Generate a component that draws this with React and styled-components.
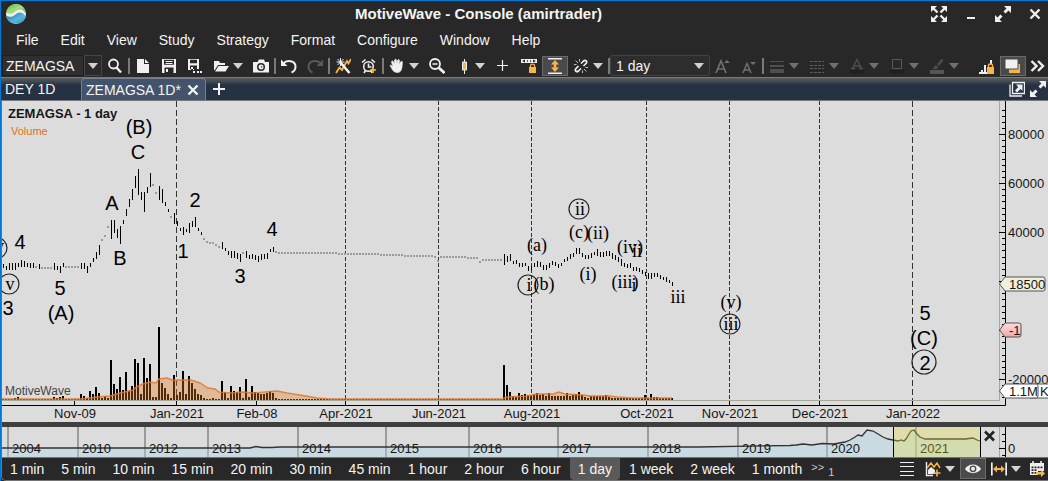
import React from 'react';
import styled, { createGlobalStyle, css } from 'styled-components';

const GlobalStyle = createGlobalStyle`
  *, *::before, *::after { box-sizing: border-box; }
  html { background: #282828; }
  body { margin: 0; font: 14px/16px "Liberation Sans", Arial, sans-serif; color: #f4f4f4; }
  button, input, select { font: inherit; color: inherit; margin: 0; border: 0; background: none; padding: 0; }
  button { display: flex; align-items: center; cursor: pointer; }
`;

const Window = styled.div`
  display: flex;
  flex-direction: column;
  background: #282828;
  border-top: 1px solid #0078d7;
  border-left: 1px solid #0078d7;
`;

const Frame = styled.main`
  border-left: 1px solid #6d6d6d;
  background: #dcdcdc;
  display: flex;
  flex-direction: column;
`;

/* ---------- title bar and menu ---------- */

const TitleBar = styled.header`
  display: flex;
  align-items: center;
  height: 25px;
  padding: 0 5px;
`;

const Title = styled.h1`
  flex: 1;
  margin: 0;
  font-size: 15px;
  line-height: 24px;
  font-weight: bold;
  text-align: center;
`;

const WindowButtons = styled.div`
  display: flex;
  gap: 16px;
`;

const MenuBar = styled.nav`
  display: flex;
  height: 28px;
  padding: 0 4px;
`;

const MenuItem = styled.button`
  padding: 0 11px;
`;

/* ---------- tool bar ---------- */

const ToolBar = styled.div`
  display: flex;
  align-items: center;
  height: 23px;
  padding-left: 1px;
`;

const ToolButton = styled.button`
  justify-content: center;
  width: ${(p) => (p.$menu ? 40 : p.$narrow ? 22 : 26)}px;
  height: 20px;
  flex: none;
  gap: 4px;
  ${(p) => p.$on && css`
    background: #4a4a4a;
    border: 1px solid #6a6a6a;
  `}
`;

const Separator = styled.span`
  flex: none;
  width: 2px;
  height: 16px;
  background: #7a7a7a;
`;

const Spacer = styled.span`
  flex: 1;
`;

const Combo = styled.div`
  display: flex;
  flex: none;
  width: 100px;
  height: 21px;
`;

const SymbolInput = styled.input`
  width: 82px;
  padding: 0 3px;
  background: #2f2f2f;
  border: 1px solid #202020;
`;

const ComboButton = styled.button`
  justify-content: center;
  width: 18px;
  background: #2a2a2a;
  border: 1px solid #454545;
`;

const SelectBox = styled.div`
  display: grid;
  flex: none;
  align-items: center;
  width: 100px;
  height: 21px;
  background: #2d2d2d;
  border: 1px solid #414141;
  border-radius: 2px;

  select {
    grid-area: 1 / 1;
    appearance: none;
    padding: 0 5px;
    outline: 0;
  }
  svg {
    grid-area: 1 / 1;
    justify-self: end;
    margin-right: 5px;
    pointer-events: none;
  }
`;

/* ---------- tabs ---------- */

const TabBar = styled.div`
  display: flex;
  align-items: stretch;
  height: 24px;
  border-top: 1px solid #7b7b7b;
  border-bottom: 1px solid #77787a;
  background: linear-gradient(#5c5e60, #263243 7px);
  padding-right: 2px;
`;

const Tab = styled.div`
  display: flex;
  flex: none;
  align-items: center;
  justify-content: space-between;
  padding: 0 4px;
  width: ${(p) => (p.$active ? 125 : 80)}px;
  white-space: nowrap;
  ${(p) => p.$active && css`
    background: #43536b;
    border: 1px solid #77808c;
    border-bottom: 0;
    border-radius: 4px 4px 0 0;
  `}
`;

const TabAction = styled.button`
  padding: 0 5px;
`;

/* ---------- chart ---------- */

const Drawing = styled.svg`
  display: block;
  width: 100%;
  height: auto;
  font: 13px "Liberation Sans", Arial, sans-serif;
  fill: #161616;
`;

const Divider = styled.div`
  height: 5px;
  background: #3f3f3f;
`;

/* ---------- period bar ---------- */

const PeriodBar = styled.footer`
  display: flex;
  align-items: stretch;
  height: 24px;
  border: solid #747474;
  border-width: 1px 0 1px 1px;
  border-bottom-left-radius: 5px;
  background: #282828;

  ${ToolButton} { height: 21px; }
`;

const Period = styled.button`
  padding: 0 8px;
  margin-right: 1px;
  border-radius: 0 0 4px 4px;
  white-space: nowrap;
  background: ${(p) => (p.$active ? '#5a5a5a' : 'none')};
`;

const More = styled.button`
  gap: 4px;
  font-size: 11px;
  color: #c8c8c8;

  span:first-child { line-height: 8px; margin-bottom: 4px; }
  span:last-child { margin-top: 5px; }
`;

/* ---------- icons ---------- */

const WHITE = '#f0f0f0';
const AMBER = '#f6b54b';

const Icon = ({ children, size = 16 }) => (
  <svg width={size} height={size} viewBox="0 0 16 16" fill={WHITE} aria-hidden="true">{children}</svg>
);

const Caret = ({ dim }) => (
  <svg width="10" height="6" viewBox="0 0 10 6" aria-hidden="true">
    <path d="M0 0H10L5 6Z" fill={dim ? '#707070' : '#d2d2d2'} />
  </svg>
);

const Logo = () => (
  <svg width="20" height="20" viewBox="0 0 20 20" aria-hidden="true">
    <defs>
      <linearGradient id="leaf" x1="0" y1="0" x2="1" y2="1">
        <stop offset="0" stopColor="#4fb52f" />
        <stop offset="0.5" stopColor="#a5e07c" />
        <stop offset="1" stopColor="#4bb04a" />
      </linearGradient>
      <linearGradient id="sea" x1="0" y1="0" x2="1" y2="1">
        <stop offset="0" stopColor="#2374ad" />
        <stop offset="0.6" stopColor="#5db4e0" />
        <stop offset="1" stopColor="#2b83bd" />
      </linearGradient>
    </defs>
    <circle cx="10" cy="10" r="10" fill="#eef5ee" />
    <path d="M0.400 9C.6 4 5 .3 10 .3c5.600 0 9.600 4.600 9.700 9.500-1.300-2.400-3-4.300-5.500-4.300C9.500 5.500 8 9.800 4 9.800 2.500 9.800 1.300 9.600 .4 9Z" fill="url(#leaf)" />
    <path d="M.4 11.800c1.400.8 2.700 1.100 4.300 1 4.200-.3 5.300-4.300 9-4.300 2.600 0 4.500 1.600 5.700 3.700C18.500 16.500 14.800 19.700 10 19.700 5 19.700.9 16.500.4 11.800Z" fill="url(#sea)" />
  </svg>
);

const ExpandIcon = () => (
  <Icon>
    <path d="M9 0h7v7ZM0 9v7h7Z" />
    <path d="M14 2 9.500 6.500M2 14l4.500-4.500" stroke={WHITE} strokeWidth="3" />
  </Icon>
);

const FullscreenIcon = () => (
  <Icon>
    <path d="M0 0h6L0 6ZM16 0v6l-6-6ZM0 16v-6l6 6ZM16 16h-6l6-6Z" />
    <path d="m2 2 4.500 4.500M14 2 9.500 6.500M2 14l4.500-4.500M14 14 9.500 9.500" stroke={WHITE} strokeWidth="2.400" />
  </Icon>
);

const icons = {
  search: <><circle cx="6.500" cy="6" r="4.500" fill="none" stroke={WHITE} strokeWidth="1.800" /><path d="M9.500 9.500 14 14.500" stroke={WHITE} strokeWidth="2.400" /></>,
  file: <path d="M2 1h7v5h5v9H2ZM10 1l4 4h-4Z" />,
  save: <path fillRule="evenodd" d="M1 1h14v14H1ZM3 1.800v5h10v-5ZM3.500 9.500V15h9V9.500ZM4.500 3h7v1h-7ZM4.500 5h7v1h-7ZM5 11h2v3H5Z" />,
  saveAs: <><path fillRule="evenodd" d="M1 1h11v10H7v1H1ZM3 1.800v3.500h7V1.800ZM3 7.500V11h7V7.500ZM4 9h2v3H4Z" /><path d="M6 13h2v2H6ZM10 13h2v2h-2ZM13 13h2v2h-2Z" /></>,
  folder: <path d="M1 3h5l1 2h5v2H5L1.800 12H1ZM5.500 8H16l-3.500 5.500H2Z" />,
  camera: <path fillRule="evenodd" d="M0 4h4.500L6 1.500h5L12 4h4v10.500H0ZM8 5a4 4 0 1 0 0 8 4 4 0 0 0 0-8ZM8 6.500a2.500 2.500 0 1 1 0 5 2.500 2.500 0 0 1 0-5ZM8 8.300v1.200h1.200V8.300Z" />,
  undo: <><path d="M2.500 5.500C5.500 1.500 14.500 2.500 14.500 8.500c0 3-1.500 5-4 6" fill="none" stroke={WHITE} strokeWidth="2" /><path d="M0 1.500V8h6.500Z" /></>,
  redo: <g fill="#5a5a5a"><path d="M13.500 5.500C10.500 1.500 1.500 2.500 1.500 8.500c0 3 1.500 5 4 6" fill="none" stroke="#5a5a5a" strokeWidth="2" /><path d="M16 1.500V8H9.500Z" /></g>,
  wand: <><path d="M1 15 4.500 9.500 7 12l5-9 1.500 2.500L16 1" fill="none" stroke={AMBER} strokeWidth="1.800" /><path d="m5 4 9.500 11" stroke={WHITE} strokeWidth="2.600" /><path d="M5.500 0v8M1.500 4h8M2.500 1l6 6M8.500 1l-6 6" stroke={WHITE} strokeWidth="1" /></>,
  alarm: <><circle cx="7.500" cy="8.500" r="4.800" fill="none" stroke={WHITE} strokeWidth="1.500" /><path d="M1 4.500 4.500 1.500M10.500 1.500 14 4.500M7.500 5.500v3.500h3M4.500 12.500 3 15M10 13l1 2" fill="none" stroke={WHITE} strokeWidth="1.600" /><path d="M9 12h6M12 9v6" stroke={AMBER} strokeWidth="1.700" /></>,
  hand: <path d="M1 7.500c1-1 2 .2 3 1.500L2.500 4c0-1.500 1.700-1.500 2 0L5.300 6.500 5.500 2.300c.3-1.400 2-1.200 2 0V6L8.600 2.300c.4-1.200 2-.8 1.900.5L9.900 6.500l1.800-2.700c.8-1 2.200-.1 1.700 1L13 9c-.3 3-1.500 5.500-4.500 5.500-3 0-4.500-1.500-5.500-3.500Z" stroke={WHITE} strokeWidth="0.600" />,
  zoomOut: <><circle cx="6" cy="6" r="5" fill="none" stroke={WHITE} strokeWidth="1.800" /><path d="M3.500 6h5" stroke={WHITE} strokeWidth="1.500" /><path d="m9.800 9.800 5.700 5.200" stroke={WHITE} strokeWidth="2.800" /></>,
  candle: <><path d="M9.500 1v15" stroke={WHITE} strokeWidth="1" /><path d="M7.500 4h4v8h-4Z" fill={AMBER} stroke={WHITE} strokeWidth="1" /></>,
  plus: <path d="M7.500 2v11M2 7.500h11" stroke={WHITE} strokeWidth="1.200" />,
  widthLock: <><path fillRule="evenodd" d="M0 1h16v4H0ZM1 3l3 1.500v-3ZM15 3l-3 1.500v-3ZM6 2.300v1.500h1V2.300ZM9 2.300v1.500h1V2.300Z" /><path d="M8 9h7v6H8Z" fill={AMBER} /><path d="M9.500 9.500V7.500c0-1.800 4-1.800 4 0v2" fill="none" stroke={AMBER} strokeWidth="1.300" /></>,
  fitHeight: <><path d="M1 0h14v1.600H1ZM1 14.400h14V16H1Z" /><path d="M8 2l4 4.500H9.300v3H12L8 14 4 9.500h2.700v-3H4Z" fill={AMBER} /></>,
  unlink: <><path d="M8 5.500 10.500 3c2-1.800 4.300.7 2.500 2.500L10.500 8M8 10.500 5.500 13c-2 1.800-4.300-.7-2.500-2.500L5.500 8" fill="none" stroke={WHITE} strokeWidth="1.700" /><path d="M2.500 2.500l2.500 2.500M6.500 1v2.500M1 6.500h2.500M13.500 13.500 11 11M9.500 15v-2.500M15 9.500h-2.500" stroke="#bdbdbd" strokeWidth="1" /></>,
  fontUp: <><path d="M1 15 6 3l5 12M3 11h6.500" fill="none" stroke="#707070" strokeWidth="1.700" /><path d="M9 5l3-3 3 3Z" fill="#707070" /></>,
  fontDown: <><path d="M2 15 6 5.500 10 15M3.500 12h5" fill="none" stroke="#707070" strokeWidth="1.500" /><path d="M9 4h6l-3 3Z" fill="#707070" /></>,
  lines: <path d="M1 3h14v1H1ZM1 7h14v2H1ZM1 11h14v4H1Z" fill="#505050" />,
  dashes: <path d="M1 3.500h14M1 7.500h14M1 10.500h14M1 14.500h14" stroke="#5c5c5c" strokeWidth="1" strokeDasharray="3 1" />,
  textColor: <><path d="M3.500 10.500 8 1.500l4.500 9M5 8h6M2 10.500h4M10 10.500h4" fill="none" stroke="#505050" strokeWidth="1.300" /><path d="M1 12h14v3.500H1Z" fill="#202020" /></>,
  shapeColor: <><path d="M3.500 1.500h9v9h-9Z" fill="none" stroke="#5a5a5a" /><path d="M1 12h14v3.500H1Z" fill="#202020" /></>,
  brush: <><path d="M8 6l4-4.500c1.500-1.500 3 0 2 1.500L10 8ZM7 7l2.500 2C9 11 6 12 3 10.500 5.500 10 5 7.500 7 7Z" fill="#4c4c4c" /><path d="M1 12h14v4H1Z" fill="#555" /></>,
  chartLock: <><path d="M0 14h8v2H0ZM2 12h2v2H2ZM5 7h2v7H5ZM11 2h2v4h-2Z" /><path d="M8 9h7v7H8Z" fill={AMBER} /><path d="M9.500 9V7.500c0-2 4-2 4 0V9" fill="none" stroke={AMBER} strokeWidth="1.400" /></>,
  layers: <><path d="M4 6h11v9H4Z" fill={AMBER} /><path d="M0 1h13v10H0Z" stroke="#4a4a4a" /></>,
  more: <path d="m2.500 3 5 5-5 5M9 3l5 5-5 5" fill="none" stroke={WHITE} strokeWidth="2.400" />,
  minimize: <path d="M4 11h8v2H4Z" />,
  close: <path d="m3.500 3.500 9 9M12.500 3.500l-9 9" stroke={WHITE} strokeWidth="2.400" />,
  popOut: <><path d="M3.500 1.500h12v11h-12ZM1 3.500v11.500h12" fill="none" stroke={WHITE} strokeWidth="1.300" /><path d="M7 3.500h6.500V10l-2-2-3.500 3.500L6 9.500 9.200 6Z" /></>,
  list: <path d="M1 1h14v1H1ZM1 5h14v1H1ZM1 10h14v1H1ZM1 14h14v1H1Z" />,
  studyAdd: <><path d="M1.500 1v13.500H8" fill="none" stroke={WHITE} strokeWidth="1.400" /><path d="M3 13V9l3-3 4 3v4Z" /><path d="m2 7 4-5 3 4 3-4 3 5" fill="none" stroke={AMBER} strokeWidth="1.500" /><path d="M8.500 12h7M12 8.500v7" stroke={AMBER} strokeWidth="1.600" /></>,
  eye: <><path d="M0 8C3 2 13 2 16 8 13 13.500 3 13.500 0 8Z" /><circle cx="8" cy="7.800" r="3.400" fill="#4a4a4a" /><circle cx="8" cy="7.800" r="2" /></>,
  fitWidth: <><path d="M0 1.500h1.700v13H0ZM14.300 1.500H16v13h-1.700Z" /><path d="m2 8 4-3.500V7h4V4.500L14 8l-4 3.500V9H6v2.500Z" fill={AMBER} /></>,
  calendar: <><path fillRule="evenodd" d="M1 2h14v8H9v4H1ZM2.500 5.500v1.800h2V5.500ZM5.500 5.500v1.800h2V5.500ZM8.500 5.500v1.800h2V5.500ZM11.500 5.500v1.800h2V5.500ZM2.500 8.300v1.800h2V8.300ZM5.500 8.300v1.800h2V8.300ZM2.500 11v1.800h2V11ZM5.500 11v1.800h2V11Z" /><path d="M4 0v3M12 0v3" stroke={WHITE} strokeWidth="1.600" /><path d="M7 11h5V8.500l4 4-4 3.500v-2.500H7Z" fill={AMBER} /></>,
};

const Tool = ({ name, label, menu, on, dim, narrow }) => (
  <ToolButton type="button" aria-label={label} $menu={menu} $on={on} $narrow={narrow}>
    <Icon>{icons[name]}</Icon>
    {menu && <Caret dim={dim} />}
  </ToolButton>
);

/* ---------- price data: [x, high, low] and [x, close] in chart units ---------- */

const BARS = [
  [3, 264, 268], [6, 266, 270], [9, 263, 270], [12, 263, 270], [15, 263, 270], [18, 263, 267], [21, 260, 267], [24, 261, 267], [27, 263, 267], [30, 263, 268], [33, 263, 268], [39, 264, 269],
  [54, 263, 270], [57, 266, 270], [60, 266, 273], [63, 263, 267], [81, 263, 269], [84, 263, 269], [87, 266, 273], [90, 263, 267], [93, 258, 262], [96, 252, 259], [99, 245, 255],
  [111, 220, 239], [114, 220, 233], [117, 229, 238], [120, 226, 244], [123, 220, 224], [126, 209, 216], [129, 199, 207], [132, 189, 200], [135, 176, 188], [138, 169, 195], [141, 192, 200], [144, 192, 212], [147, 187, 193], [150, 173, 187],
  [159, 186, 200], [162, 189, 203], [165, 202, 206], [168, 209, 212], [174, 213, 224], [177, 221, 226], [180, 228, 231], [183, 227, 235], [186, 229, 232], [189, 223, 233], [192, 221, 227], [195, 217, 227], [198, 228, 231], [201, 232, 235],
  [222, 242, 249], [225, 248, 251], [228, 251, 255], [231, 251, 258], [234, 251, 258], [237, 253, 259], [240, 254, 262], [246, 251, 258], [249, 255, 259], [252, 254, 259], [255, 255, 260], [258, 256, 262], [261, 254, 260], [264, 254, 259], [267, 253, 259], [270, 249, 252], [273, 247, 252],
  [504, 254, 265], [507, 256, 262], [510, 254, 261], [513, 261, 264], [516, 260, 264], [519, 263, 267], [522, 263, 267], [525, 263, 266], [528, 266, 271], [531, 266, 270], [534, 263, 267], [537, 261, 267], [540, 262, 267], [543, 265, 270], [546, 265, 270], [549, 263, 268], [552, 261, 265], [555, 262, 266], [558, 264, 268], [561, 263, 266], [564, 259, 262], [567, 257, 261], [570, 254, 259], [573, 253, 257], [576, 248, 254], [579, 248, 254], [582, 253, 257], [585, 255, 259], [588, 255, 259], [591, 253, 258], [594, 252, 255], [597, 249, 256], [600, 252, 257], [603, 252, 257], [606, 251, 256], [609, 251, 256], [612, 253, 259], [615, 255, 260], [618, 257, 262], [621, 259, 266], [624, 263, 267], [627, 264, 268], [630, 263, 268], [633, 267, 271], [636, 267, 271], [639, 268, 272], [642, 270, 274], [645, 272, 276], [648, 273, 279], [651, 273, 279], [654, 273, 277], [657, 273, 277], [660, 275, 279], [663, 277, 280], [666, 277, 282], [669, 280, 283], [672, 282, 286],
];

const run = (from, to, y) => {
  const out = [];
  for (let x = from; x <= to; x += 3) out.push([x, y]);
  return out;
};

const DOTS = [
  [36, 267], ...run(42, 51, 268), ...run(66, 78, 267), [102, 240], [105, 236], [108, 227], [153, 185], [156, 193], [171, 217],
  [204, 239], [207, 242], [210, 243], [213, 243], [216, 245], [219, 247], [243, 253],
  [276, 252], ...run(279, 336, 253), ...run(339, 378, 254), ...run(381, 402, 255), ...run(405, 432, 256), [435, 257], [438, 261],
  ...run(441, 465, 257), ...run(468, 477, 258), [480, 262], ...run(483, 501, 260),
];

const VOLUME = {
  54: 3, 57: 2, 60: 3, 63: 4, 15: 2, 18: 3, 81: 6, 84: 4, 87: 2, 90: 9, 93: 6, 96: 13, 99: 7, 102: 2, 105: 4, 108: 2, 111: 40, 114: 16, 117: 11, 120: 23, 123: 10, 126: 28, 129: 9, 132: 14, 135: 41, 138: 37, 141: 6, 144: 42, 147: 22, 150: 36, 153: 3, 156: 3, 159: 73, 162: 17, 165: 12, 168: 6, 171: 2, 174: 25, 177: 5, 180: 8, 183: 29, 186: 6, 189: 24, 192: 17, 195: 11, 198: 6, 201: 5, 204: 2, 213: 2, 222: 19, 225: 8, 228: 2, 231: 14, 234: 9, 237: 8, 240: 13, 243: 2, 246: 21, 249: 3, 252: 14, 255: 8, 258: 7, 261: 6, 264: 6, 267: 7, 270: 9, 273: 7, 276: 2,
  504: 35, 507: 15, 510: 8, 513: 4, 516: 3, 519: 7, 522: 5, 525: 6, 528: 5, 531: 4, 534: 6, 537: 7, 540: 5, 543: 6, 546: 4, 549: 7, 552: 4, 555: 4, 558: 4, 561: 4, 564: 4, 567: 7, 570: 4, 573: 5, 576: 6, 579: 8, 582: 5, 585: 3, 588: 2, 591: 4, 594: 4, 597: 4, 600: 4, 603: 4, 606: 5, 609: 3, 645: 5, 648: 2, 651: 6, 654: 3, 657: 3,
};

const AVERAGE_PEAK = 'L80 399 97 397 110 396 120 393 133 390 136 387 143 384 150 382 156 383 159 379 167 378 172 380 191 380 200 383 208 388 215 389 219 392 230 393 243 392 253 393 277 391 287 393 300 395 317 398 330 399';
const AVERAGE_TAIL = 'L502 399 507 397 527 396 537 394 553 394 559 392 565 394 583 395 590 396 610 396 617 397 633 398 672 398';
const AVERAGE = `M2 399${AVERAGE_PEAK}${AVERAGE_TAIL}`;

const MONTHS = [
  [74, 'Nov-09'], [176, 'Jan-2021', 'long'], [256, 'Feb-08'], [345, 'Apr-2021', 'short'], [438, 'Jun-2021', 'short'], [531, 'Aug-2021', 'short'],
  [646, 'Oct-2021', 'short'], [729, 'Nov-2021', 'short'], [819, 'Dec-2021', 'short'], [912, 'Jan-2022', 'long'],
];

const WAVES = [
  [139, 134, '(B)'], [138, 159, 'C'], [112, 210, 'A'], [120, 265, 'B'], [195, 207, '2'], [183, 258, '1'], [272, 236, '4'], [240, 283, '3'],
  [60, 295, '5'], [61, 320, '(A)'], [20, 249, '4'], [8, 315, '3'], [925, 320, '5'], [924, 345, '(C)'], [925, 370, '2', 924, 362, 12],
];

const SUBWAVES = [
  [-3, 252, 'iv', -3, 248, 10], [10, 290, 'v', 9, 284, 10], [537, 251, '(a)'], [529, 291, 'i', 528, 285, 10], [544, 290, '(b)'], [580, 215, 'ii', 579, 209, 10], [579, 238, '(c)'],
  [598, 239, '(ii)'], [588, 280, '(i)'], [630, 253, '(iv)'], [637, 257, 'ii'], [625, 288, '(iii)'], [634, 291, 'i'], [678, 303, 'iii'], [731, 308, '(v)'], [731, 330, 'iii', 730, 324, 10],
];

const WaveLabels = ({ items, size, family }) => (
  <g fontSize={size} fontFamily={family} textAnchor="middle" fill="#000">
    {items.map(([x, y, text, cx, cy, r]) => (
      <g key={`${x}-${y}`}>
        {r && <circle cx={cx} cy={cy} r={r} fill="none" stroke="#222" strokeWidth="1.200" />}
        <text x={x} y={y}>{text}</text>
      </g>
    ))}
  </g>
);

const PriceTag = ({ y, right, fill, text }) => (
  <g>
    <path d={`M999.500 ${y}L1005 ${y - 7}H${right - 2}q2 0 2 2v10q0 2 -2 2H1005Z`} fill={fill} stroke="#555" />
    <text x="1009" y={y + 5}>{text}</text>
  </g>
);

const ticks = Array.from({ length: 48 }, (_, i) => ({ y: Math.round(109.500 + i * 6.125) + 0.500, major: i % 8 === 4 }));

const PriceChart = () => (
  <Drawing viewBox="2 101 1046 321" role="img" aria-label="ZEMAGSA daily price chart">
    <defs>
      <linearGradient id="pink" x1="0" y1="0" x2="0" y2="1">
        <stop offset="0" stopColor="#fbdcdc" />
        <stop offset="1" stopColor="#f0a9a9" />
      </linearGradient>
    </defs>
    {MONTHS.map(([x, label, dash]) => (
      <g key={label}>
        {dash && <path d={`M${x + 0.500} 101V400`} stroke="#333" strokeDasharray={dash === 'long' ? '6 3' : '4 2'} />}
        <path d={`M${x + 0.500} 400v5`} stroke="#000" />
        <text x={x + 1} y="418" textAnchor="middle">{label}</text>
      </g>
    ))}
    <path d="M2 400.500H999.500V101" fill="none" stroke="#a8a899" />
    <g fill="#000">
      {Array.from({ length: 224 }, (_, i) => 3 + i * 3).map((x) => {
        const h = VOLUME[x] || (x > 609 ? 2 : 1);
        return <rect key={x} x={x - 1} y={400 - h} width="2" height={h} />;
      })}
    </g>
    <path d={`${AVERAGE}V400H2Z`} fill="#e8771e" fillOpacity="0.350" />
    <path d={AVERAGE} fill="none" stroke="#e0782a" strokeOpacity="0.850" strokeWidth="1.400" />
    <g fill="#000">
      {BARS.map(([x, top, bottom]) => <rect key={x} x={x} y={top} width="1" height={bottom - top} />)}
    </g>
    <g fill="#9b9b9b">
      {DOTS.map(([x, y]) => <rect key={x} x={x - 1} y={y - 1} width="2" height="2" />)}
    </g>
    <path d="M2 405.500H1005.500V101" fill="none" stroke="#000" />
    {ticks.map(({ y, major }) => <path key={y} d={`M${major ? 999 : 1002} ${y}H1005`} stroke="#000" />)}
    {[[80000, 134], [60000, 183], [40000, 232], [-20000, 379]].map(([value, y]) => (
      <text key={value} x="1008" y={y + 5}>{value}</text>
    ))}
    <PriceTag y={284} right={1045} fill="#efefdb" text="18500" />
    <PriceTag y={330} right={1021} fill="url(#pink)" text="-1" />
    <path d="M1030 384H1050V398H1030Z" fill="#fff" stroke="#555" />
    <text x="1040" y="396">K</text>
    <PriceTag y={391} right={1038} fill="#fff" text="1.1M" />
    <text x="8" y="118" fontWeight="bold">ZEMAGSA - 1 day</text>
    <text x="11" y="135" fontSize="11" fill="#e0701a">Volume</text>
    <text x="5" y="395" fontSize="12" fill="#444">MotiveWave</text>
    <WaveLabels items={WAVES} size="20" />
    <WaveLabels items={SUBWAVES} size="18" family="'Liberation Serif', 'Times New Roman', serif" />
  </Drawing>
);

const YEARS = [[8, 2004], [78, 2010], [145, 2012], [208, 2013], [298, 2014], [386, 2015], [469, 2016], [558, 2017], [648, 2018], [738, 2019], [827, 2020], [916, 2021]];
const HISTORY = 'M2 448H250L256 446.500 262 447.500H272L280 447H698L790 445.500 796 445 803 444 812 445 822 443.500 834 444 845 442 850 440 855 437 858 435 862 436 867 430 873 431 878 434 883 437 888 439 893 440 898 441 901 440 904 441 906 439 909 434 911 431 914 430 917 434 920 437 925 439H965L973 438 977 440 980 441';

const Overview = () => (
  <Drawing viewBox="2 427 1046 30" role="img" aria-label="History overview">
    {YEARS.map(([x, year]) => <path key={year} d={`M${x} 427V457`} stroke="#9c9c9c" strokeWidth="2" />)}
    <path d={`${HISTORY}V457H2Z`} fill="#add8e6" fillOpacity="0.400" />
    <path d={HISTORY} fill="none" stroke="#333" strokeWidth="1.300" />
    {YEARS.map(([x, year]) => <text key={year} x={x + 4} y="453">{year}</text>)}
    <path d="M893 427H980V457H893Z" fill="#e8e23c" fillOpacity="0.300" />
    <path d="M893.500 427V457M980.500 427V457" stroke="#000" />
    <path d="m985 431.500 9 9M994 431.500l-9 9" stroke="#222" strokeWidth="2.600" />
    <path d="M999.500 427V457" stroke="#a8a899" />
    <path d="M1005.500 427V457M1002 434.500h3M1002 441.500h3M999 448.500h6M1002 455.500h3" stroke="#000" />
    <text x="1008" y="453">0</text>
  </Drawing>
);

const PERIODS = ['1 min', '5 min', '10 min', '15 min', '20 min', '30 min', '45 min', '1 hour', '2 hour', '6 hour', '1 day', '1 week', '2 week', '1 month'];

export default function App() {
  return (
    <Window>
      <GlobalStyle />
      <TitleBar>
        <Logo />
        <Title>MotiveWave - Console (amirtrader)</Title>
        <WindowButtons>
          <button type="button" aria-label="Full screen"><FullscreenIcon /></button>
          <button type="button" aria-label="Minimize"><Icon>{icons.minimize}</Icon></button>
          <button type="button" aria-label="Maximize"><ExpandIcon /></button>
          <button type="button" aria-label="Close"><Icon>{icons.close}</Icon></button>
        </WindowButtons>
      </TitleBar>
      <MenuBar>
        {['File', 'Edit', 'View', 'Study', 'Strategy', 'Format', 'Configure', 'Window', 'Help'].map((item) => (
          <MenuItem key={item} type="button">{item}</MenuItem>
        ))}
      </MenuBar>
      <ToolBar>
        <Combo>
          <SymbolInput aria-label="Symbol" defaultValue="ZEMAGSA" />
          <ComboButton type="button" aria-label="Choose symbol"><Caret /></ComboButton>
        </Combo>
        <Tool name="search" label="Search" />
        <Separator />
        <Tool name="file" label="New" />
        <Tool name="save" label="Save" />
        <Tool name="saveAs" label="Save as" />
        <Tool name="folder" label="Open" menu />
        <Tool name="camera" label="Snapshot" />
        <Separator />
        <Tool name="undo" label="Undo" />
        <Tool name="redo" label="Redo" />
        <Separator />
        <Tool name="wand" label="Analyze" />
        <Tool name="alarm" label="Add alert" />
        <Separator />
        <Tool name="hand" label="Cursor" menu />
        <Tool name="zoomOut" label="Zoom out" />
        <Tool name="candle" label="Bar type" menu />
        <Tool name="plus" label="Crosshair" />
        <Tool name="widthLock" label="Lock bar width" />
        <Tool name="fitHeight" label="Fit height" on />
        <Tool name="unlink" label="Link" menu />
        <Separator />
        <SelectBox>
          <select aria-label="Bar size" defaultValue="1 day">
            {PERIODS.map((p) => <option key={p}>{p}</option>)}
          </select>
          <Caret />
        </SelectBox>
        <Tool name="fontUp" label="Larger text" />
        <Tool name="fontDown" label="Smaller text" />
        <Separator />
        <Tool name="lines" label="Line width" menu dim />
        <Tool name="dashes" label="Line style" menu dim />
        <Tool name="textColor" label="Text color" menu dim />
        <Tool name="shapeColor" label="Outline color" menu dim />
        <Tool name="brush" label="Fill color" menu dim />
        <Spacer />
        <Tool name="chartLock" label="Lock scale" />
        <Tool name="layers" label="Layers" on />
        <Tool name="more" label="More tools" narrow />
      </ToolBar>
      <TabBar>
        <Tab>DEY 1D</Tab>
        <Tab $active>
          ZEMAGSA 1D*
          <button type="button" aria-label="Close tab"><Icon>{icons.close}</Icon></button>
        </Tab>
        <TabAction type="button" aria-label="Add tab">
          <Icon><path d="M7 2h2v5h5v2H9v5H7V9H2V7h5Z" /></Icon>
        </TabAction>
        <Spacer />
        <TabAction type="button" aria-label="Detach"><Icon>{icons.popOut}</Icon></TabAction>
        <button type="button" aria-label="Expand"><ExpandIcon /></button>
      </TabBar>
      <Frame>
        <PriceChart />
        <Divider />
        <Overview />
      </Frame>
      <PeriodBar>
        {PERIODS.map((p) => <Period key={p} type="button" $active={p === '1 day'}>{p}</Period>)}
        <More type="button" aria-label="More bar sizes"><span>&gt;&gt;</span><span>1</span></More>
        <Spacer />
        <Tool name="list" label="List" />
        <Tool name="studyAdd" label="Add study" menu />
        <Tool name="eye" label="Show" on />
        <Tool name="fitWidth" label="Fit width" menu />
        <Tool name="calendar" label="Go to date" narrow />
      </PeriodBar>
    </Window>
  );
}
